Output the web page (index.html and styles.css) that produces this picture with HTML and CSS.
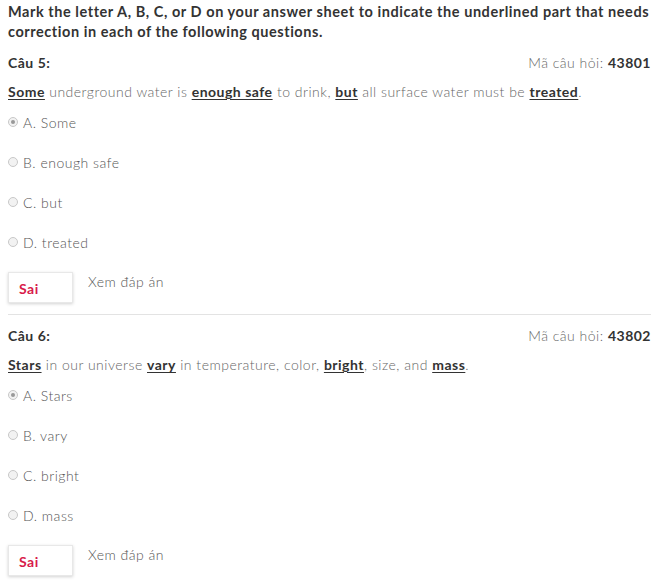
FILE: index.html
```html
<!DOCTYPE html>
<html>
<head>
<meta charset="utf-8">
<link rel="stylesheet" href="styles.css">
</head>
<body>
<div class="page">
  <p class="intro">Mark the letter A, B, C, or D on your answer sheet to indicate the underlined part that needs correction in each of the following questions.</p>

  <div class="question">
    <div class="qhead"><span class="qnum">Câu 5:</span><span class="qcode">Mã câu hỏi: <b>43801</b></span></div>
    <p class="stem"><u>Some</u> underground water is <u>enough safe</u> to drink, <u>but</u> all surface water must be <u>treated</u>.</p>
    <ul class="options">
      <li class="opt"><span class="radio checked"></span>A. Some</li>
      <li class="opt"><span class="radio"></span>B. enough safe</li>
      <li class="opt"><span class="radio"></span>C. but</li>
      <li class="opt"><span class="radio"></span>D. treated</li>
    </ul>
    <div class="result"><span class="badge">Sai</span><span class="answer">Xem đáp án</span></div>
  </div>

  <div class="question last">
    <div class="qhead"><span class="qnum">Câu 6:</span><span class="qcode">Mã câu hỏi: <b>43802</b></span></div>
    <p class="stem"><u>Stars</u> in our universe <u>vary</u> in temperature, color, <u>bright</u>, size, and <u>mass</u>.</p>
    <ul class="options">
      <li class="opt"><span class="radio checked"></span>A. Stars</li>
      <li class="opt"><span class="radio"></span>B. vary</li>
      <li class="opt"><span class="radio"></span>C. bright</li>
      <li class="opt"><span class="radio"></span>D. mass</li>
    </ul>
    <div class="result"><span class="badge">Sai</span><span class="answer">Xem đáp án</span></div>
  </div>
</div>
</body>
</html>
```
FILE: styles.css
```css
html, body { margin: 0; padding: 0; background: #fff; }
body {
  font-family: "Lato", "Open Sans", sans-serif;
  color: #555;
  font-size: 14px;
  letter-spacing: 0.5px;
}
.page { width: 643px; padding: 2px 8px 0 8px; }
.intro {
  margin: 0;
  font-weight: 700;
  color: #333;
  font-size: 14.5px;
  line-height: 20px;
  letter-spacing: 0.55px;
}
.question { border-bottom: 1px solid #e3e3e3; padding-bottom: 11px; }
.question.last { border-bottom: none; }
.qhead {
  display: flex;
  justify-content: space-between;
  align-items: center;
  height: 20px;
  margin-top: 10px;
}
.qnum { font-weight: 700; color: #333; }
.qcode { color: #666; font-weight: 300; }
.qcode b { color: #333; font-weight: 700; }
.stem {
  margin: 10px 0 0 0;
  line-height: 20px;
  color: #666;
  font-weight: 300;
}
.stem u { font-weight: 700; color: #333; text-decoration-thickness: 1px; text-underline-offset: 2px; }
.options { list-style: none; margin: 10px 0 0 0; padding: 0; }
.opt {
  display: flex;
  align-items: center;
  height: 20px;
  margin-bottom: 20px;
  color: #555;
  font-weight: 300;
}
.radio {
  width: 8px; height: 8px;
  border: 1px solid #c8c8c8;
  border-radius: 50%;
  background: #f2f2f2;
  margin: 0 5px 0 0;
  box-sizing: content-box;
  position: relative;
}
.radio.checked::after {
  content: "";
  position: absolute;
  left: 2px; top: 2px;
  width: 4px; height: 4px;
  border-radius: 50%;
  background: #999;
}
.result { display: flex; align-items: flex-start; }
.badge {
  width: 65px; height: 31px;
  box-sizing: border-box;
  border: 1px solid #e8e8e8;
  box-shadow: 0 1px 3px rgba(0,0,0,0.18);
  color: #d81b4a;
  font-weight: 700;
  padding: 6px 0 0 10px;
  line-height: 20px;
}
.answer { margin-left: 15px; line-height: 20px; color: #555; font-weight: 300; }
```
